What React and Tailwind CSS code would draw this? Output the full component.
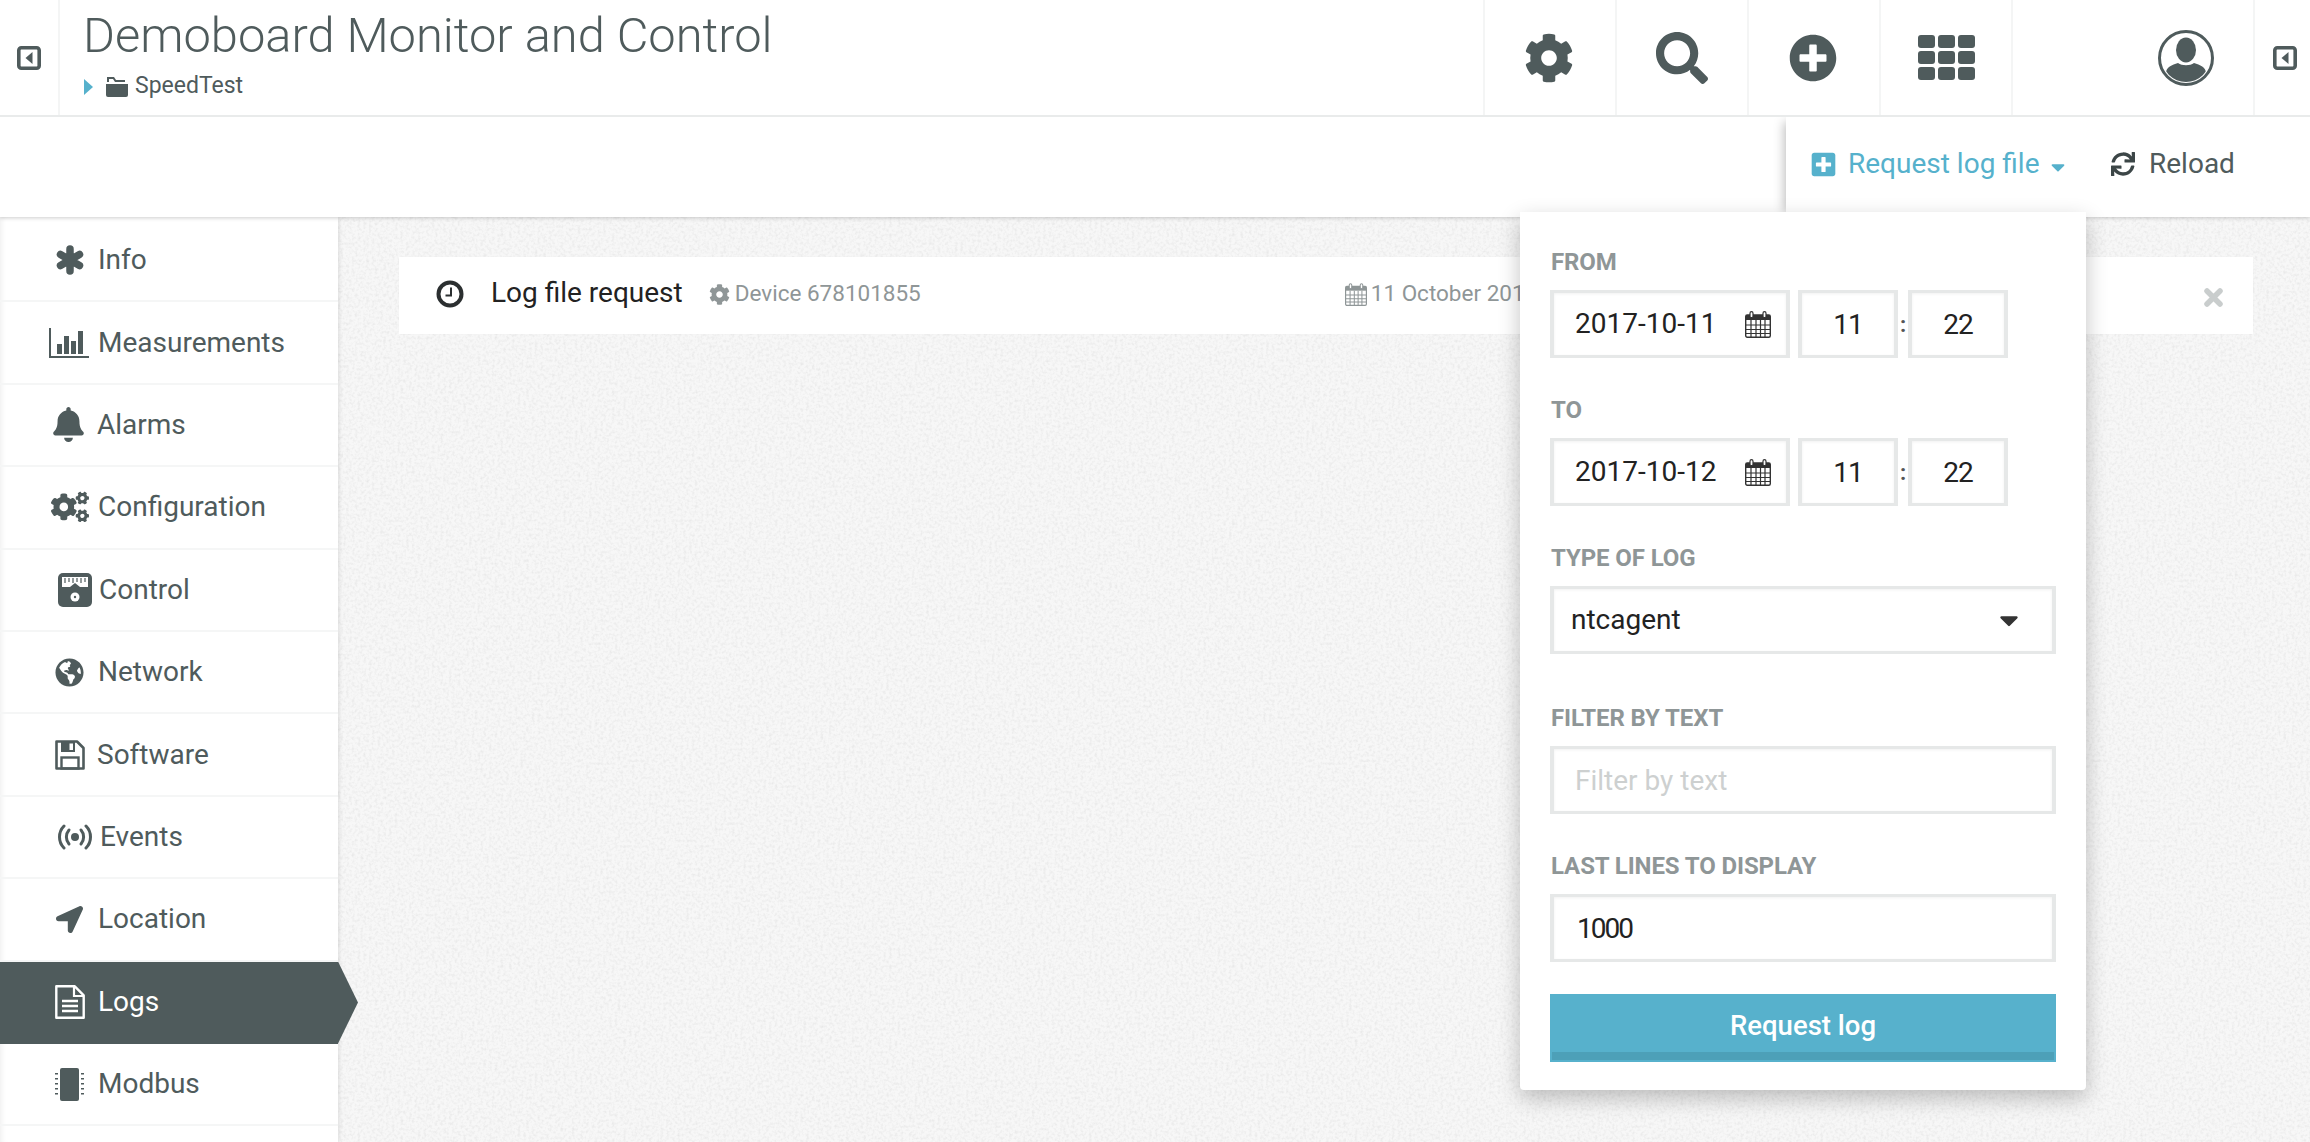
import React from "react";
import {
  FaCog, FaSearch, FaPlusCircle, FaBell, FaCogs, FaGlobeAmericas,
  FaLocationArrow, FaPlusSquare, FaSync, FaCaretDown,
} from "react-icons/fa";

const CollapseIcon = ({ s = 24 }) => (
  <svg width={s} height={s} viewBox="0 0 24 24">
    <rect x="1.800" y="1.800" width="20.400" height="20.400" rx="2.500" fill="none" stroke="currentColor" strokeWidth="3.600" />
    <path d="M15.500 6v12l-7-6z" fill="currentColor" />
  </svg>
);

const AsteriskIcon = () => (
  <svg width="28" height="30" viewBox="0 0 28 30" stroke="currentColor" strokeWidth="7.500" strokeLinecap="round">
    <path d="M14 4v22M4.500 9.500l19 11M23.500 9.500l-19 11" />
  </svg>
);

const BarIcon = () => (
  <svg width="40" height="30" viewBox="0 0 40 30" fill="currentColor">
    <rect x="0" y="0" width="2" height="30" />
    <rect x="0" y="28" width="40" height="2" />
    <rect x="8" y="16" width="5" height="10" />
    <rect x="15" y="8" width="5" height="18" />
    <rect x="22" y="13" width="5" height="13" />
    <rect x="29" y="3" width="5" height="23" />
  </svg>
);

const GaugeIcon = () => (
  <svg width="34" height="34" viewBox="0 0 34 34">
    <rect width="34" height="34" rx="5" fill="currentColor" />
    <path d="M4 4h26v10h-8l-5-4-5 4H4z" fill="#fff" />
    <path d="M7 5v5M11 5v4M15 5v5M19 5v4M23 5v5M27 5v4" stroke="currentColor" strokeWidth="1.200" />
    <circle cx="17" cy="24" r="4.500" fill="#fff" />
    <circle cx="17" cy="24" r="1.200" fill="currentColor" />
  </svg>
);

const SaveIcon = () => (
  <svg width="30" height="30" viewBox="0 0 30 30">
    <path d="M2 1.500h20l6.500 6.500v20.500H1.500V1.500z" fill="none" stroke="currentColor" strokeWidth="2.600" strokeLinejoin="round" />
    <path d="M6 2h14v10H6z" fill="currentColor" />
    <rect x="14.500" y="3.500" width="3.500" height="6.500" fill="#fff" />
    <rect x="6.500" y="17.500" width="17" height="11" fill="none" stroke="currentColor" strokeWidth="2.400" />
  </svg>
);

const LogIcon = () => (
  <svg width="30" height="34" viewBox="0 0 30 34" fill="none" stroke="currentColor">
    <path d="M1.300 1.300h18.500l8.900 9v22.400H1.300z" strokeWidth="2.400" strokeLinejoin="round" />
    <path d="M19 1.500v9.500h9.500" strokeWidth="2.200" />
    <path d="M7 16h16M7 21h16M7 26h16" strokeWidth="2.400" />
  </svg>
);

const EventsIcon = () => (
  <svg width="34" height="26" viewBox="0 0 34 26" fill="none" stroke="currentColor" strokeWidth="3" strokeLinecap="round">
    <path d="M6 2C0 8 0 18 6 24" />
    <path d="M11 6C7.500 10 7.500 16 11 20" />
    <path d="M23 6c3.500 4 3.500 10 0 14" />
    <path d="M28 2c6 6 6 16 0 22" />
    <circle cx="17" cy="13" r="4" fill="currentColor" stroke="none" />
  </svg>
);

const ChipIcon = () => (
  <svg width="29" height="33" viewBox="0 0 29 33" fill="currentColor">
    <rect x="5" y="0" width="19" height="33" rx="2" />
    <path d="M0 5h3v1.500H0zM0 10h3v1.500H0zM0 15h3v1.500H0zM0 20h3v1.500H0zM0 25h3v1.500H0zM26 5h3v1.500h-3zM26 10h3v1.500h-3zM26 15h3v1.500h-3zM26 20h3v1.500h-3zM26 25h3v1.500h-3z" />
  </svg>
);

const FolderIcon = () => (
  <svg width="22" height="20" viewBox="0 0 22 20" fill="currentColor">
    <path d="M0 7h22v11a2 2 0 0 1-2 2H2a2 2 0 0 1-2-2z" />
    <path d="M1 0h7l2 3h9v2H9L7 2H3v3H1z" />
  </svg>
);

const UserIcon = () => (
  <svg width="56" height="56" viewBox="0 0 56 56">
    <circle cx="28" cy="28" r="26.500" fill="#fff" stroke="currentColor" strokeWidth="3" />
    <clipPath id="u"><circle cx="28" cy="28" r="24" /></clipPath>
    <g clipPath="url(#u)" fill="currentColor">
      <ellipse cx="28" cy="20" rx="10" ry="12.500" />
      <path d="M8 56V43c0-6 6-8 12-10 4 3 12 3 16 0 6 2 12 4 12 10v13z" />
    </g>
  </svg>
);

const GridIcon = () => (
  <svg width="57" height="45" viewBox="0 0 57 45" fill="currentColor">
    {[0, 20, 40].map((x) =>
      [0, 16, 32].map((y) => <rect key={`${x}-${y}`} x={x} y={y} width="17" height="13" rx="3" />)
    )}
  </svg>
);

const ClockIcon = () => (
  <svg width="28" height="28" viewBox="0 0 28 28" fill="none" stroke="#2b2f30">
    <circle cx="14" cy="14" r="11.500" strokeWidth="4" />
    <path d="M15 7.500V15.500H9.500" strokeWidth="2" />
  </svg>
);

const CloseIcon = () => (
  <svg width="19" height="19" viewBox="0 0 19 19" stroke="#c9cdcd" strokeWidth="5.500" strokeLinecap="round">
    <path d="M3 3l13 13M16 3L3 16" />
  </svg>
);

const CalendarIcon = ({ w = 26, h = 27, c = "#333" }) => (
  <svg width={w} height={h} viewBox="0 0 26 27" fill="none" stroke={c}>
    <rect x="0.700" y="4" width="24.600" height="22.300" rx="1.500" strokeWidth="1.400" />
    <rect x="1" y="4" width="24" height="5" fill={c} stroke="none" />
    <path d="M1 14h24M1 18.500h24M1 22.500h24M6 9v17M11 9v17M15.500 9v17M20 9v17" strokeWidth="1.200" />
    <rect x="5" y="0.700" width="3" height="6" rx="1.500" fill="#fff" strokeWidth="1.200" />
    <rect x="18" y="0.700" width="3" height="6" rx="1.500" fill="#fff" strokeWidth="1.200" />
  </svg>
);

const PaperGrain = () => (
  <svg className="absolute inset-0 w-full h-full pointer-events-none" aria-hidden="true">
    <filter id="grain">
      <feTurbulence type="fractalNoise" baseFrequency="0.35" numOctaves="2" seed="4" />
      <feColorMatrix values="0 0 0 0 0  0 0 0 0 0  0 0 0 0 0  0 0 0 0.12 -0.05" />
    </filter>
    <rect width="100%" height="100%" filter="url(#grain)" />
  </svg>
);

const nav = [
  { label: "Info", icon: <AsteriskIcon />, pad: "pl-[7px]" },
  { label: "Measurements", icon: <BarIcon />, pad: "pl-0" },
  { label: "Alarms", icon: <FaBell size={35} />, pad: "pl-[2px]", text: "-ml-px" },
  { label: "Configuration", icon: <FaCogs size={38} />, pad: "pl-[2px]" },
  { label: "Control", icon: <GaugeIcon />, pad: "pl-[9px]", text: "ml-px" },
  { label: "Network", icon: <FaGlobeAmericas size={29} />, pad: "pl-[6px]" },
  { label: "Software", icon: <SaveIcon />, pad: "pl-[6px]", text: "-ml-px" },
  { label: "Events", icon: <EventsIcon />, pad: "pl-[9px]", text: "ml-[2px]" },
  { label: "Location", icon: <FaLocationArrow size={27} />, pad: "pl-[7px]" },
  { label: "Logs", icon: <LogIcon />, pad: "pl-[6px]", active: true },
  { label: "Modbus", icon: <ChipIcon />, pad: "pl-[6px]" },
];

const HeaderCell = ({ w, children }) => (
  <div className={`${w} h-full flex items-center justify-center border-l-2 border-[#f4f5f5]`}>{children}</div>
);

const Field = ({ label, className = "", children }) => (
  <div className={className}>
    <div className="h-[28px] mb-[15px] pl-px pt-[2px] flex items-center text-[24px] font-bold text-[#8f9697] uppercase tracking-[-0.1px]">{label}</div>
    {children}
  </div>
);

const inputCls =
  "h-[68px] border-y-[3px] border-x-4 border-[#e6e8e8] bg-white text-[#222] text-[28px] outline-none shadow-[inset_0_1px_3px_rgba(0,0,0,0.06)] placeholder:text-[#cdd0d0]";

const DateRow = ({ date }) => (
  <div className="flex items-center h-[68px]">
    <div className={`${inputCls} w-[240px] flex items-center justify-between pl-[21px] pr-[15px]`}>
      <span>{date}</span>
      <CalendarIcon />
    </div>
    <input readOnly value="11" className={`${inputCls} w-[100px] ml-[8px] text-center tracking-[-1px]`} />
    <span className="w-[10px] text-center text-[22px] font-bold text-[#555]">:</span>
    <input readOnly value="22" className={`${inputCls} w-[100px] text-center tracking-[-1px]`} />
  </div>
);

export default function App() {
  return (
    <div className="relative w-[2310px] h-[1142px] overflow-hidden bg-[#f4f4f4] text-[#4f5b5c] [font-family:Roboto,sans-serif]">
      <header className="relative z-20 h-[117px] bg-white border-b-2 border-[#e9ebeb] flex items-center">
        <div className="w-[60px] h-full flex items-center pl-[17px] border-r-2 border-[#f4f5f5]">
          <CollapseIcon />
        </div>
        <div className="pl-[23px] flex-1">
          <h1 className="text-[48.800px] leading-[60px] font-light -mt-[11px]">Demoboard Monitor and Control</h1>
          <div className="flex items-center h-[24px] mt-[9px] pl-px">
            <svg width="9" height="16" viewBox="0 0 9 16" fill="#56b1cc"><path d="M0 0l9 8-9 8z" /></svg>
            <span className="ml-[13px]"><FolderIcon /></span>
            <span className="ml-[7px] text-[23px]">SpeedTest</span>
          </div>
        </div>
        <HeaderCell w="w-[132px]"><span className="-ml-[2px]"><FaCog size={50} /></span></HeaderCell>
        <HeaderCell w="w-[132px]"><FaSearch size={52} /></HeaderCell>
        <HeaderCell w="w-[132px]"><span className="-ml-[2px]"><FaPlusCircle size={48} /></span></HeaderCell>
        <HeaderCell w="w-[132px]"><GridIcon /></HeaderCell>
        <div className="w-[242px] h-full flex items-center justify-end pr-[39px] border-l-2 border-[#f4f5f5]"><UserIcon /></div>
        <div className="w-[57px] h-full flex items-center pl-[18px] border-l-2 border-[#f4f5f5]"><CollapseIcon /></div>
      </header>

      <div className="relative z-10 h-[100px] bg-white shadow-[0_1px_4px_rgba(0,0,0,0.2)] flex justify-end">
        <div className="relative w-[300px] h-full bg-white flex items-center pl-[24px] pb-[6px] text-[#56b1cc] text-[28px] shadow-[-7px_0_10px_-5px_rgba(0,0,0,0.25)]">
          <FaPlusSquare size={27} />
          <span className="ml-[11px]">Request log file</span>
          <FaCaretDown size={22} className="ml-[8px] mt-[6px]" />
        </div>
        <div className="w-[224px] h-full flex items-center pl-[25px] pb-[6px] text-[28px]">
          <FaSync size={24} className="text-[#3c4647]" />
          <span className="ml-[14px]">Reload</span>
        </div>
      </div>

      <div className="flex h-[925px]">
        <nav className="relative z-[5] w-[338px] pt-[3px] bg-white shadow-[inset_6px_0_6px_-5px_rgba(0,0,0,0.08),2px_0_3px_rgba(0,0,0,0.08)]">
          {nav.map((n) => (
            <div
              key={n.label}
              className={`relative flex items-center h-[82.4px] border-b-2 ${
                n.active ? "bg-[#4f5b5c] text-white border-[#4f5b5c]" : "border-[#f5f6f6]"
              }`}
            >
              <div className={`ml-[49px] w-[49px] flex items-center ${n.pad}`}>{n.icon}</div>
              <span className={`text-[28px] ${n.text || ""}`}>{n.label}</span>
              {n.active && (
                <span className="absolute left-[338px] top-0 h-[82px] w-[20px] bg-[#4f5b5c] [clip-path:polygon(0_0,100%_50%,0_100%)]" />
              )}
            </div>
          ))}
        </nav>

        <main className="relative flex-1 pt-[40px] pl-[61px] pr-[57px] bg-[#f7f7f7]">
          <PaperGrain />
          <div className="relative h-[77px] bg-white flex items-center pl-[37px] pr-[31px] pb-[3px] shadow-[0_0_2px_rgba(0,0,0,0.03)]">
            <ClockIcon />
            <span className="ml-[27px] -mt-[2px] text-[28px] text-[#222]">Log file request</span>
            <FaCog size={21} className="ml-[26px] text-[#8f9697]" />
            <span className="ml-[5px] text-[22.500px] text-[#8f9697]">Device 678101855</span>
            <span className="ml-[424px]"><CalendarIcon w={22} h={23} c="#8f9697" /></span>
            <span className="ml-[4px] text-[22.500px] text-[#8f9697] whitespace-nowrap">11 October 2017</span>
            <span className="ml-auto mt-[6px] -mr-px"><CloseIcon /></span>
          </div>
        </main>
      </div>

      <div className="absolute z-30 left-[1520px] top-[212px] w-[566px] h-[878px] px-[30px] pt-[35px] bg-white rounded-b-[4px] shadow-[0_8px_22px_rgba(0,0,0,0.24)]">
        <Field label="From" className="mb-[37px]"><DateRow date="2017-10-11" /></Field>
        <Field label="To" className="mb-[37px]"><DateRow date="2017-10-12" /></Field>
        <Field label="Type of log" className="mb-[49px]">
          <div className={`${inputCls} flex items-center justify-between pl-[17px] pr-[28px]`}>
            <span>ntcagent</span>
            <FaCaretDown size={30} className="text-[#333]" />
          </div>
        </Field>
        <Field label="Filter by text" className="mb-[37px]">
          <input placeholder="Filter by text" className={`${inputCls} w-full pl-[21px]`} />
        </Field>
        <Field label="Last lines to display" className="mb-[32px]">
          <input readOnly value="1000" className={`${inputCls} w-full pl-[23px] tracking-[-2px]`} />
        </Field>
        <button className="relative block w-full h-[68px] bg-[#57b1cc] text-white text-[27.500px] pb-[4px] font-medium">
          Request log
          <span className="absolute left-[2px] right-[2px] bottom-[2px] h-[8px] bg-[#4da0b8]" />
        </button>
      </div>
    </div>
  );
}
